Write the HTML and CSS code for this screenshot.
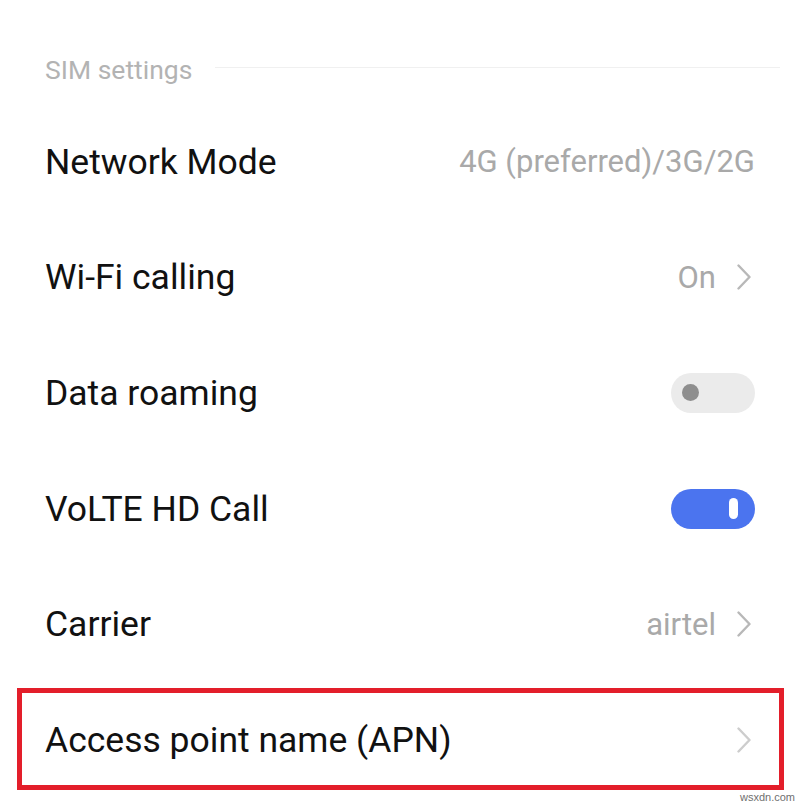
FILE: index.html
```html
<!DOCTYPE html>
<html lang="en">
<head>
  <meta charset="UTF-8">
  <title>SIM settings</title>
  <link rel="stylesheet" href="styles.css">
</head>
<body>

  <div class="screen">
    <div class="section-title">
      <span>SIM settings</span>
      <div class="rule"></div>
    </div>

    <div class="row">
      <div class="label">Network Mode</div>
      <div class="value">4G (preferred)/3G/2G</div>
    </div>

    <div class="row">
      <div class="label">Wi-Fi calling</div>
      <div class="value">On
        <svg class="chevron" width="14" height="26" viewBox="0 0 14 26"><polyline points="1.5,1.5 12.5,13 1.5,24.5"/></svg>
      </div>
    </div>

    <div class="row">
      <div class="label">Data roaming</div>
      <div class="toggle"><div class="knob"></div></div>
    </div>

    <div class="row">
      <div class="label">VoLTE HD Call</div>
      <div class="toggle on"><div class="knob"></div></div>
    </div>

    <div class="row">
      <div class="label">Carrier</div>
      <div class="value">airtel
        <svg class="chevron" width="14" height="26" viewBox="0 0 14 26"><polyline points="1.5,1.5 12.5,13 1.5,24.5"/></svg>
      </div>
    </div>

    <div class="row highlight">
      <div class="label">Access point name (APN)</div>
      <div class="value">
        <svg class="chevron light" width="14" height="26" viewBox="0 0 14 26"><polyline points="1.5,1.5 12.5,13 1.5,24.5"/></svg>
      </div>
    </div>

    <div class="watermark">wsxdn.com</div>
  </div>

</body>
</html>
```

FILE: styles.css
```css
body {
  margin: 0;
  background-color: #ffffff;
  font-family: Roboto, "Noto Sans", sans-serif;
}

.screen {
  position: relative;
  width: 800px;
  height: 805px;
  overflow: hidden;
  display: flex;
  flex-direction: column;
}

.section-title {
  height: 104px;
  box-sizing: border-box;
  padding: 34px 20px 0 45px;
  display: flex;
  align-items: center;
  gap: 23px;
  color: #b3b3b3;
  font-size: 26.5px;
}

.section-title span {
  white-space: nowrap;
}

.rule {
  flex: 1;
  height: 1px;
  background-color: #f0f0f0;
  margin-top: -4px;
}

.row {
  position: relative;
  height: 115.6px;
  display: flex;
  align-items: center;
  justify-content: space-between;
  padding: 0 45px;
}

.label {
  color: #111111;
  font-size: 35.5px;
}

.value {
  display: flex;
  align-items: center;
  gap: 21px;
  color: #a9a9a9;
  font-size: 31px;
}

.chevron {
  fill: none;
  stroke: #b8b8b8;
  stroke-width: 2.4;
  stroke-linecap: round;
  stroke-linejoin: round;
  margin-right: 4px;
}

.chevron.light {
  stroke: #cdcdcd;
}

.toggle {
  width: 84px;
  height: 40px;
  border-radius: 20px;
  background-color: #ebebeb;
  display: flex;
  align-items: center;
  padding-left: 11px;
  box-sizing: border-box;
}

.toggle .knob {
  width: 17px;
  height: 17px;
  border-radius: 50%;
  background-color: #8e8e8e;
}

.toggle.on {
  background-color: #4b74ef;
  justify-content: flex-end;
  padding-left: 0;
  padding-right: 17px;
}

.toggle.on .knob {
  width: 9px;
  height: 21px;
  border-radius: 5px;
  background-color: #ffffff;
}

.highlight::after {
  content: "";
  position: absolute;
  top: 6px;
  bottom: 8px;
  left: 17px;
  right: 16px;
  border: 5px solid #e31e2a;
  pointer-events: none;
}

.watermark {
  position: absolute;
  right: 5px;
  bottom: 2px;
  font-family: "Liberation Sans", Arial, sans-serif;
  font-size: 11px;
  color: #6f6f6f;
}
```
